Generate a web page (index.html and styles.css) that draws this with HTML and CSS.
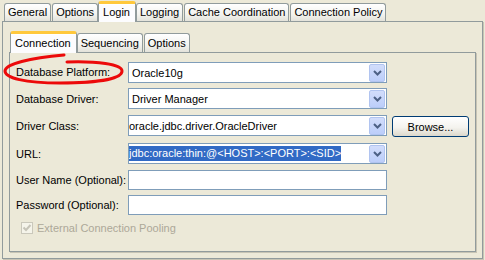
FILE: index.html
```html
<!DOCTYPE html>
<html lang="en">
<head>
    <meta charset="UTF-8">
    <title>Login - Connection</title>
    <link rel="stylesheet" href="styles.css">
</head>
<body>
    <div class="window">
        <div class="tabs outer-tabs">
            <div class="tab">General</div>
            <div class="tab">Options</div>
            <div class="tab active">Login</div>
            <div class="tab">Logging</div>
            <div class="tab">Cache Coordination</div>
            <div class="tab">Connection Policy</div>
        </div>
        <div class="panel outer-panel">
            <div class="tabs inner-tabs">
                <div class="tab active">Connection</div>
                <div class="tab">Sequencing</div>
                <div class="tab">Options</div>
            </div>
            <div class="panel inner-panel">
                <div class="form">
                    <label class="lbl">Database Platform:</label>
                    <div class="combo"><span class="value">Oracle10g</span><span class="arrow"><svg width="9" height="6" viewBox="0 0 9 6"><path d="M1 1 L4.5 4.5 L8 1" fill="none" stroke="#4d6185" stroke-width="2"/></svg></span></div>

                    <label class="lbl">Database Driver:</label>
                    <div class="combo"><span class="value">Driver Manager</span><span class="arrow"><svg width="9" height="6" viewBox="0 0 9 6"><path d="M1 1 L4.5 4.5 L8 1" fill="none" stroke="#4d6185" stroke-width="2"/></svg></span></div>

                    <label class="lbl">Driver Class:</label>
                    <div class="combo"><span class="value scrolled">oracle.jdbc.driver.OracleDriver</span><span class="arrow"><svg width="9" height="6" viewBox="0 0 9 6"><path d="M1 1 L4.5 4.5 L8 1" fill="none" stroke="#4d6185" stroke-width="2"/></svg></span></div>
                    <button class="btn">Browse...</button>

                    <label class="lbl">URL:</label>
                    <div class="combo"><span class="value scrolled"><span class="sel">jdbc:oracle:thin:@&lt;HOST&gt;:&lt;PORT&gt;:&lt;SID&gt;</span></span><span class="arrow"><svg width="9" height="6" viewBox="0 0 9 6"><path d="M1 1 L4.5 4.5 L8 1" fill="none" stroke="#4d6185" stroke-width="2"/></svg></span></div>

                    <label class="lbl">User Name (Optional):</label>
                    <div class="field"></div>

                    <label class="lbl">Password (Optional):</label>
                    <div class="field"></div>
                </div>
                <div class="check">
                    <span class="box"><svg width="10" height="10" viewBox="0 0 10 10"><path d="M1.5 4.5 L4 7 L8.5 2" fill="none" stroke="#c6c4b8" stroke-width="2"/></svg></span>
                    <span>External Connection Pooling</span>
                </div>
            </div>
        </div>

        <!-- marca roja a mano alrededor de la etiqueta -->
        <svg class="mark" width="485" height="260" viewBox="0 0 485 260">
            <path d="M67 62 C96 61 122 64 122 71 C122 79 96 83 60 83 C25 83 5 78 5 71 C5 64 30 58 64 55" fill="none" stroke="#ec0a0a" stroke-width="3" stroke-linecap="round"/>
        </svg>
    </div>
</body>
</html>
```

FILE: styles.css
```css
* {
    box-sizing: border-box;
}
body {
    margin: 0;
    background-color: #ece9d8;
    font-family: "Liberation Sans", Arial, sans-serif;
    font-size: 11px;
    color: #000;
}
.window {
    position: relative;
    width: 485px;
    height: 260px;
    overflow: hidden;
}

/* pestañas estilo XP */
.tabs {
    display: flex;
    align-items: flex-end;
    height: 21px;
}
.outer-tabs {
    padding-left: 4px;
}
.inner-tabs {
    padding-left: 2px;
}
.tab {
    height: 18px;
    padding: 0 3px;
    margin-right: 1px;
    border: 1px solid #919b9c;
    border-bottom: none;
    border-radius: 3px 3px 0 0;
    background: linear-gradient(#ffffff, #f3f3ef 60%, #e3e2da);
    line-height: 17px;
    white-space: nowrap;
}
.inner-tabs .tab {
    height: 19px;
    line-height: 19px;
}
.tabs .tab.active {
    position: relative;
    z-index: 1;
    height: 21px;
    margin: 0 0 -1px -1px;
    padding: 0 5px 0 4px;
    background: #fcfcfe;
    border-top: 3px solid #ffc83c;
    box-shadow: inset 0 1px 0 #ffffff;
    line-height: 17px;
}
.inner-tabs .tab.active {
    height: 22px;
    line-height: 18px;
}

/* paneles */
.panel {
    border: 1px solid #919b9c;
    box-shadow: 1px 1px 0 #c7c4b4;
}
.outer-panel {
    margin-left: 2px;
    width: 481px;
    height: 238px;
    padding: 9px 6px 7px 6px;
}
.inner-panel {
    width: 467px;
    height: 200px;
    padding: 9px 6px 0 6px;
}

/* formulario */
.form {
    display: grid;
    grid-template-columns: 107px 259px 77px;
    grid-template-rows: 20px 21px 22px 21px 19px 19px;
    column-gap: 5px;
    row-gap: 6px;
    align-items: start;
}
.lbl {
    grid-column: 1;
    align-self: center;
    white-space: nowrap;
}
.combo,
.field {
    grid-column: 2;
    display: flex;
    align-items: center;
    height: 21px;
    border: 1px solid #7f9db9;
    background-color: #fff;
    overflow: hidden;
}
.field {
    height: 20px;
}
.combo .value {
    flex: 1;
    padding-left: 3px;
    white-space: nowrap;
    overflow: hidden;
}
.combo .value.scrolled {
    padding-left: 0;
}
.sel {
    display: inline-block;
    padding: 1px 0 2px 0;
    background-color: #316ac5;
    color: #fff;
}
.arrow {
    display: flex;
    align-items: center;
    justify-content: center;
    width: 16px;
    height: 18px;
    margin-right: 1px;
    border: 1px solid #b1c4f0;
    border-radius: 2px;
    background: linear-gradient(#d2ddfb, #bccefa);
}
.btn {
    grid-column: 3;
    height: 21px;
    margin-top: 1px;
    border: 1px solid #003c74;
    border-radius: 3px;
    background: linear-gradient(#ffffff, #f4f3ee 55%, #dcd8cb);
    font-family: "Liberation Sans", Arial, sans-serif;
    font-size: 11px;
    color: #000;
    padding: 0;
}

/* casilla desactivada */
.check {
    display: flex;
    align-items: center;
    gap: 4px;
    margin: 8px 0 0 5px;
    color: #aca899;
}
.check .box {
    display: flex;
    align-items: center;
    justify-content: center;
    width: 12px;
    height: 12px;
    border: 1px solid #cac8bb;
    background-color: #f5f4ea;
}

.mark {
    position: absolute;
    left: 0;
    top: 0;
    pointer-events: none;
}
```
